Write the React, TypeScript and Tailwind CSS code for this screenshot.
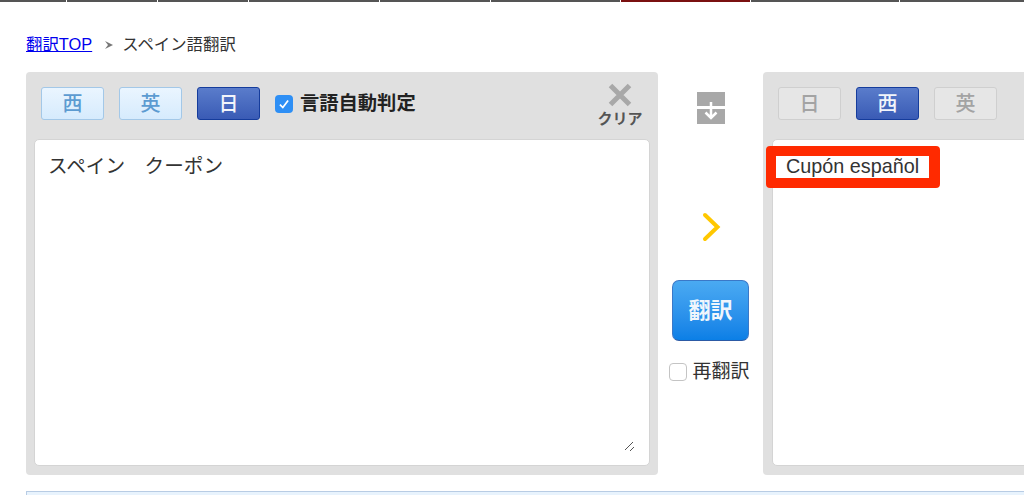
const jp = { fontFamily: '"Liberation Sans", "Noto Sans CJK JP", sans-serif' };

function LangBtn({ label, kind }: { label: string; kind: "light" | "active" | "off" }) {
  const styles = {
    light: "border-[#a3c8e8] bg-gradient-to-b from-[#eaf5ff] to-[#d6ebfd] text-[#5c9bd1]",
    active: "border-[#153c9c] bg-gradient-to-b from-[#5a7ccb] to-[#3a5bb5] text-[#f2f5fb]",
    off: "border-[#cfcfcf] bg-[#e6e6e6] text-[#a3a3a3]",
  }[kind];
  return (
    <div className={`flex h-[33px] w-[63px] items-center justify-center rounded-[3px] border text-[20px] font-medium ${styles}`}>
      {label}
    </div>
  );
}

export default function App() {
  const segments = [
    { w: "w-[66px]", c: "bg-[#555555]" },
    { w: "w-[90px]", c: "bg-[#555555]" },
    { w: "w-[90px]", c: "bg-[#555555]" },
    { w: "w-[130px]", c: "bg-[#555555]" },
    { w: "w-[110px]", c: "bg-[#555555]" },
    { w: "w-[129px]", c: "bg-[#555555]" },
    { w: "w-[129px]", c: "bg-[#7a1010]" },
    { w: "w-[148px]", c: "bg-[#555555]" },
    { w: "flex-1", c: "bg-[#555555]" },
  ];
  return (
    <div className="h-[495px] w-[1024px] overflow-hidden bg-white text-[#333333]" style={jp}>
      <div className="flex h-[2px] gap-[1px]">
        {segments.map((s, i) => (
          <div key={i} className={`${s.w} ${s.c}`} />
        ))}
      </div>
      <div className="pl-[26px]">
        <div className="flex h-[70px] items-center pt-[15px] text-[16.4px] leading-none">
          <a href="#" className="text-[#0000ee] underline">翻訳TOP</a>
          <svg width="10" height="10" viewBox="0 0 10 10" className="ml-[12px] mr-[8px]">
            <path d="M1 1 L9 5 L1 9 L4 5 Z" fill="#777777" />
          </svg>
          <span>スペイン語翻訳</span>
        </div>
        <div className="flex h-[403px] w-[1100px]">
          <div className="relative h-full w-[632px] rounded-[4px] bg-[#e0e0e0] px-[8px] pb-[9px]">
            <div className="flex h-[67px] items-start pl-[7px] pt-[15px]">
              <div className="flex gap-[15px]">
                <LangBtn label="西" kind="light" />
                <LangBtn label="英" kind="light" />
                <LangBtn label="日" kind="active" />
              </div>
              <label className="ml-[15px] flex h-[33px] items-center gap-[7px] pt-[1px] text-[19.3px] font-bold text-[#222222]">
                <span className="flex h-[18px] w-[18px] items-center justify-center rounded-[4px] bg-[#2e8ff5]">
                  <svg width="14" height="14" viewBox="0 0 12 12">
                    <path d="M2.5 6.5 L5 9 L9.5 3" fill="none" stroke="#ffffff" strokeWidth="1.5" />
                  </svg>
                </span>
                言語自動判定
              </label>
            </div>
            <div className="absolute right-[15px] top-[10px] flex w-[46px] flex-col items-center">
              <svg width="26" height="26" viewBox="0 0 26 26">
                <path d="M3.5 3.5 L22.5 22.5 M22.5 3.5 L3.5 22.5" stroke="#a8a8a8" strokeWidth="5" />
              </svg>
              <span className="mt-[3px] whitespace-nowrap text-[15px] font-bold leading-none text-[#555555]">クリア</span>
            </div>
            <div className="relative h-[327px] rounded-[5px] border border-[#d4d4d4] bg-white px-[13px] py-[14px] text-[19.6px] leading-[24px] text-[#333333]">
              スペイン　クーポン
              <svg width="12" height="12" viewBox="0 0 12 12" className="absolute bottom-[12px] right-[13px]">
                <path d="M1 9 L9 1 M6 10 L10 6" stroke="#555555" strokeWidth="1" />
              </svg>
            </div>
          </div>

          <div className="flex w-[105px] flex-col items-center">
            <svg width="28" height="32" viewBox="0 0 28 32" className="mt-[20px]">
              <rect x="0" y="0" width="28" height="14" fill="#a8a8a8" />
              <rect x="0" y="17" width="28" height="15" fill="#a8a8a8" />
              <path d="M14 10 L14 26 M8.5 20.5 L14 26 L19.5 20.5" fill="none" stroke="#ffffff" strokeWidth="2.5" />
            </svg>
            <svg width="20" height="32" viewBox="0 0 20 32" className="mt-[87px]">
              <path d="M4 4 L16.5 16 L4 28" fill="none" stroke="#ffc800" strokeWidth="4" strokeLinecap="round" />
            </svg>
            <div className="mt-[37px] flex h-[61px] w-[77px] items-center justify-center rounded-[7px] border border-[#3a78c8] border-b-[#2c5aa5] bg-gradient-to-b from-[#4aaaf2] to-[#0a7fe6] text-[22px] font-bold text-[#f0f6fc]">
              翻訳
            </div>
            <label className="mt-[21px] flex items-center gap-[5px] pr-[2px] text-[19px] leading-none text-[#333333]">
              <span className="h-[18px] w-[18px] rounded-[4px] border border-[#c4c4c4] bg-white" />
              再翻訳
            </label>
          </div>

          <div className="h-full w-[300px] rounded-[4px] bg-[#e0e0e0] pb-[9px] pl-[9px]">
            <div className="flex h-[67px] gap-[15px] pl-[6px] pt-[15px]">
              <LangBtn label="日" kind="off" />
              <LangBtn label="西" kind="active" />
              <LangBtn label="英" kind="off" />
            </div>
            <div className="relative h-[327px] rounded-[5px] border border-[#d4d4d4] bg-white">
              <div className="absolute left-[-7px] top-[6px] h-[42px] w-[174px] rounded-[4px] border-[10px] border-r-[11px] border-[#ff2a00] bg-white">
                <span className="block whitespace-nowrap pl-[10px] text-[19.8px] leading-[20px] text-[#333333]">Cupón español</span>
              </div>
            </div>
          </div>
        </div>
        <div className="mt-[16px] h-[20px] w-[1100px] border border-[#b8cce4] bg-[#e8f3fd]" />
      </div>
    </div>
  );
}
